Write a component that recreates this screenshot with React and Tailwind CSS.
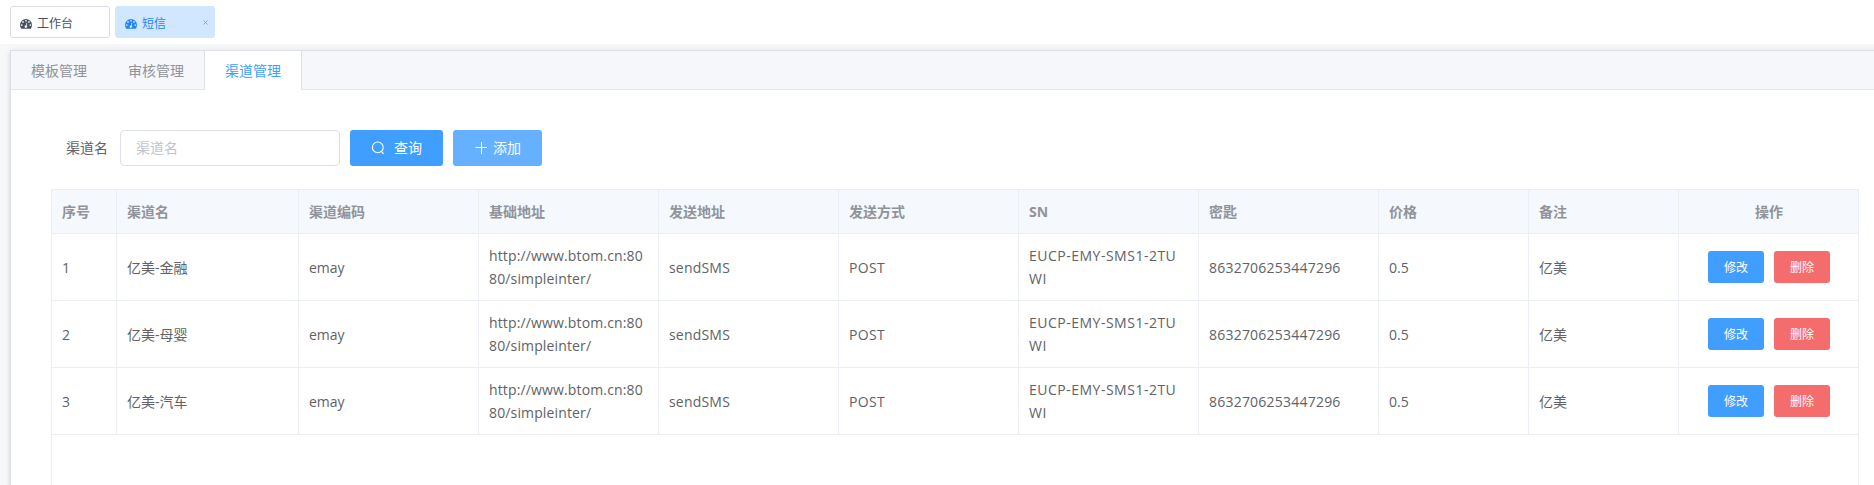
const tags = [
  { title: "工作台", active: false },
  { title: "短信", active: true },
];

const tabs = ["模板管理", "审核管理", "渠道管理"];
const activeTab = "渠道管理";

const columns = [
  { label: "序号", key: "id", tracking: "" },
  { label: "渠道名", key: "name", tracking: "" },
  { label: "渠道编码", key: "code", tracking: "" },
  { label: "基础地址", key: "baseUrl", tracking: "tracking-[0.14px]" },
  { label: "发送地址", key: "sendUrl", tracking: "tracking-[0.2px]" },
  { label: "发送方式", key: "method", tracking: "tracking-[0.3px]" },
  { label: "SN", key: "sn", tracking: "tracking-[0.5px]" },
  { label: "密匙", key: "secret", tracking: "tracking-[0.22px]" },
  { label: "价格", key: "price", tracking: "" },
  { label: "备注", key: "remark", tracking: "" },
];

const common = {
  code: "emay",
  baseUrl: "http://www.btom.cn:8080/simpleinter/",
  sendUrl: "sendSMS",
  method: "POST",
  sn: "EUCP-EMY-SMS1-2TUWI",
  secret: "8632706253447296",
  price: "0.5",
  remark: "亿美",
};

const rows = [
  { id: 1, name: "亿美-金融", ...common },
  { id: 2, name: "亿美-母婴", ...common },
  { id: 3, name: "亿美-汽车", ...common },
];

const grid = "grid grid-cols-[65px_182px_repeat(6,180px)_150px_150px_180px]";
const cell = "flex items-center border-r border-b border-[#ebeef5] px-2.5";

function GaugeIcon() {
  return (
    <svg className="mr-[5px] h-2.5 w-3" viewBox="0 0 12 10" fill="currentColor">
      <path
        fillRule="evenodd"
        d="M6 0 A6 6 0 0 1 12 6 C12 7.3 11.6 8.5 11 9.5 Q10.8 9.8 10.4 9.8 H1.6 Q1.2 9.8 1 9.5 C0.4 8.5 0 7.3 0 6 A6 6 0 0 1 6 0 Z
          M1.7 5.2 a0.85 0.85 0 1 0 0 1.7 a0.85 0.85 0 1 0 0 -1.7 Z
          M3 2.1 a0.85 0.85 0 1 0 0 1.7 a0.85 0.85 0 1 0 0 -1.7 Z
          M6 0.9 a0.85 0.85 0 1 0 0 1.7 a0.85 0.85 0 1 0 0 -1.7 Z
          M9 2.1 a0.85 0.85 0 1 0 0 1.7 a0.85 0.85 0 1 0 0 -1.7 Z
          M10.3 5.2 a0.85 0.85 0 1 0 0 1.7 a0.85 0.85 0 1 0 0 -1.7 Z
          M6.7 3.6 L7.3 3.8 L6.6 6.4 A1.3 1.3 0 1 1 5.9 6.2 Z"
      />
    </svg>
  );
}

function SearchIcon() {
  return (
    <svg width="14" height="14" viewBox="0 0 14 14" fill="none" stroke="currentColor" strokeWidth="1.1">
      <circle cx="6.8" cy="6.4" r="5.4" />
      <path d="M10.4 10.4 L12.6 12.8" />
    </svg>
  );
}

function PlusIcon() {
  return (
    <svg width="14" height="14" viewBox="0 0 14 14" fill="none" stroke="currentColor" strokeWidth="1">
      <path d="M7.5 1 V13 M1.5 6.5 H13" />
    </svg>
  );
}

function TagBar() {
  return (
    <div className="flex h-11 gap-[5px] bg-white pt-1.5 pl-2.5 text-xs">
      {tags.map((t) => (
        <div
          key={t.title}
          className={`flex h-8 w-[100px] items-center rounded-[3px] border pt-[3px] pl-[9px] ${
            t.active
              ? "border-[#d1e6ff] bg-[#d1e6ff] text-[#1f86ff]"
              : "border-[#d8dce5] bg-white text-[#495060]"
          }`}
        >
          <GaugeIcon />
          <span>{t.title}</span>
          {t.active && (
            <svg className="mr-1.5 mb-[3px] ml-auto size-[5px]" viewBox="0 0 5 5" stroke="#7d9fe8" strokeWidth="0.9">
              <path d="M0.5 0.5 L4.5 4.5 M4.5 0.5 L0.5 4.5" />
            </svg>
          )}
        </div>
      ))}
    </div>
  );
}

function Tabs() {
  return (
    <div className="flex h-[39px] border-b border-[#e4e7ed] bg-[#f5f7fa]">
      {tabs.map((t) => (
        <div
          key={t}
          className={`-ml-px flex h-[39px] w-[98px] items-center justify-center border-x ${
            t === activeTab
              ? "border-[#dcdfe6] bg-white text-[#409eff]"
              : "border-transparent text-[#909399]"
          }`}
        >
          {t}
        </div>
      ))}
    </div>
  );
}

function SearchForm() {
  return (
    <div className="flex h-9 items-center pl-[15px]">
      <label className="w-[54px] text-[#606266]">渠道名</label>
      <input
        placeholder="渠道名"
        className="h-9 w-[220px] rounded border border-[#dcdfe6] px-[15px] pb-0.5 outline-none placeholder:text-[#c0c4cc]"
      />
      <button className="ml-2.5 flex h-9 w-[93px] items-center rounded-[3px] bg-[#409eff] pl-[21px] text-white">
        <SearchIcon />
        <span className="ml-[9px]">查询</span>
      </button>
      <button className="ml-2.5 flex h-9 w-[89px] items-center rounded-[3px] bg-[#66b1ff] pl-[21px] text-white">
        <PlusIcon />
        <span className="ml-[5px]">添加</span>
      </button>
    </div>
  );
}

function ChannelTable() {
  return (
    <div className="mt-[23px] h-[400px] w-[1808px] border-t border-r border-l border-[#ebeef5]">
      <div className={`${grid} h-11 bg-[#f5f8fd] font-bold text-[#909399]`}>
        {columns.map((c) => (
          <div key={c.key} className={cell}>
            {c.label}
          </div>
        ))}
        <div className="flex items-center justify-center border-b border-[#ebeef5]">操作</div>
      </div>

      {rows.map((row) => (
        <div key={row.id} className={`${grid} h-[67px] leading-[23px] text-[#606266]`}>
          {columns.map((c) => (
            <div key={c.key} className={cell}>
              <span className={`min-w-0 break-all ${c.tracking}`}>{row[c.key]}</span>
            </div>
          ))}
          <div className="flex items-center justify-center gap-2.5 border-b border-[#ebeef5] text-xs text-white">
            <button className="h-8 w-14 rounded-[3px] bg-[#409eff] pt-0.5">修改</button>
            <button className="h-8 w-14 rounded-[3px] bg-[#f56c6c] pt-0.5">删除</button>
          </div>
        </div>
      ))}
    </div>
  );
}

export default function App() {
  return (
    <div className="h-[485px] w-full overflow-hidden bg-[#f6f7f9] font-['Open_Sans','Noto_Sans_CJK_SC',sans-serif] text-sm">
      <TagBar />
      <div className="mt-1.5 ml-2.5 h-[600px] w-[1900px] border border-[#dcdfe6] bg-white shadow-[0_2px_4px_0_rgba(0,0,0,0.12),0_0_6px_0_rgba(0,0,0,0.04)]">
        <Tabs />
        <div className="pt-10 pl-10">
          <SearchForm />
          <ChannelTable />
        </div>
      </div>
    </div>
  );
}
